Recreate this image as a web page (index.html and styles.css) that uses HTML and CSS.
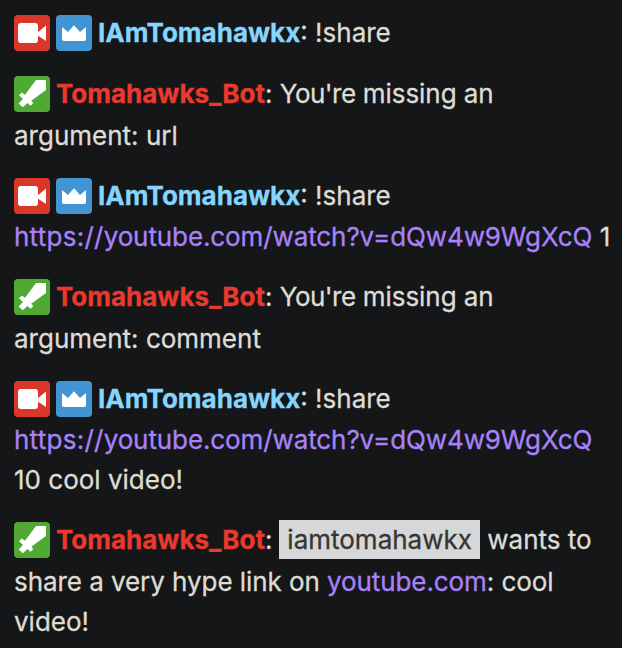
FILE: index.html
```html
<!DOCTYPE html>
<html lang="en">
<head>
<meta charset="utf-8">
<title>Chat</title>
<link rel="stylesheet" href="styles.css">
</head>
<body>
<svg class="defs" aria-hidden="true">
  <symbol id="broadcaster" viewBox="0 0 36 36"><rect x="4" y="8" width="20" height="20" rx="3"/><path d="M23 18l9-7.500v15.500l-9-6z"/></symbol>
  <symbol id="crown" viewBox="0 0 36 36"><path d="M6 12l6 5 6-6.800 6 6.800 6-5v12a2 2 0 0 1-2 2H8a2 2 0 0 1-2-2z"/></symbol>
  <symbol id="sword" viewBox="0 0 36 36"><path d="M22 4h10v10L17.300 24.700l2 2.300-2.800 2.700-3-2.700-4.700 4.200-4.200-3.700L9 23l-4-3.700 2.800-2.700 3.200 2.200z"/></symbol>
</svg>
<main class="chat">
  <div class="message"><svg class="badge badge-live"><use href="#broadcaster"/></svg><svg class="badge badge-prime"><use href="#crown"/></svg><span class="name name-user">IAmTomahawkx</span>: !share</div>
  <div class="message"><svg class="badge badge-mod"><use href="#sword"/></svg><span class="name name-bot">Tomahawks_Bot</span>: <span class="tighter">You're</span> <span class="tight">missing an</span> argument: url</div>
  <div class="message"><svg class="badge badge-live"><use href="#broadcaster"/></svg><svg class="badge badge-prime"><use href="#crown"/></svg><span class="name name-user">IAmTomahawkx</span>: !share <a class="link"><span class="scheme">https://</span>youtube.com/watch?v=dQw4w9WgXcQ</a> 1</div>
  <div class="message"><svg class="badge badge-mod"><use href="#sword"/></svg><span class="name name-bot">Tomahawks_Bot</span>: <span class="tighter">You're</span> <span class="tight">missing an</span> argument: comment</div>
  <div class="message"><svg class="badge badge-live"><use href="#broadcaster"/></svg><svg class="badge badge-prime"><use href="#crown"/></svg><span class="name name-user">IAmTomahawkx</span>: !share <a class="link"><span class="scheme">https://</span>youtube.com/watch?v=dQw4w9WgXcQ</a> 10 cool video!</div>
  <div class="message"><svg class="badge badge-mod"><use href="#sword"/></svg><span class="name name-bot">Tomahawks_Bot</span>: <span class="mention">iamtomahawkx</span> wants to <span class="tight">share a very hype link on <a class="link">youtube.com</a>: cool</span> video!</div>
</main>
</body>
</html>
```
FILE: styles.css
```css
body {
  margin: 0;
  background: #141617;
  color: #dedcd5;
  font: 26px/40px Inter, "Liberation Sans", sans-serif;
  -webkit-text-stroke: 0.3px currentColor;
}
.defs { position: absolute; width: 0; height: 0; }
.chat { padding-top: 2.9px; height: 645px; overflow: hidden; }
.message { padding: 10px 8px 9.93px 14px; }
.badge {
  width: 36px;
  height: 36px;
  margin: 0 6px 3.5px 0;
  vertical-align: -12.5px;
  border-radius: 4px;
  fill: #fff;
}
.badge-live { background: #d9372a; }
.badge-prime { background: #4294d2; }
.badge-mod { background: #4fa933; }
.name { font-weight: 700; }
.name-user { color: #85d5fd; }
.name-bot { color: #ea392e; }
.link { color: #a981f8; letter-spacing: -0.1px; }
.scheme { letter-spacing: 0.25px; }
.tight { letter-spacing: -0.06px; }
.tighter { letter-spacing: -0.55px; }
.mention {
  margin-left: -0.5px;
  padding: 4px 8px;
  background: #d6d7d9;
  color: #373530;
}
```
